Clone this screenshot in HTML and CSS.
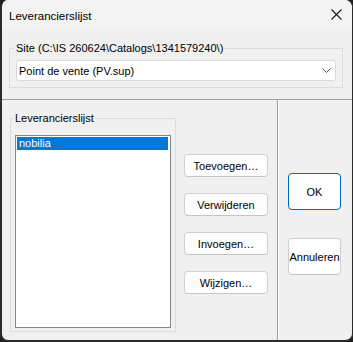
FILE: index.html
```html
<!DOCTYPE html>
<html lang="nl">
<head>
    <meta charset="UTF-8">
    <title>Leverancierslijst</title>
    <link rel="stylesheet" href="styles.css">
</head>
<body>
    <div class="window">
        <div class="titlebar">
            <span class="title">Leverancierslijst</span>
            <svg class="close" width="11" height="11" viewBox="0 0 11 11">
                <path d="M0.5 0.5 L10.5 10.5 M10.5 0.5 L0.5 10.5" stroke="#1a1a1a" stroke-width="1.1" fill="none"/>
            </svg>
        </div>
        <div class="top">
            <fieldset class="group site">
                <legend>Site (C:\IS 260624\Catalogs\1341579240\)</legend>
                <div class="combo">
                    <span>Point de vente (PV.sup)</span>
                    <svg width="9" height="5" viewBox="0 0 9 5">
                        <path d="M0.5 0.5 L4.5 4.5 L8.5 0.5" stroke="#5f5f5f" stroke-width="1" fill="none"/>
                    </svg>
                </div>
            </fieldset>
        </div>
        <div class="bottom">
            <div class="left">
                <fieldset class="group list-group">
                    <legend>Leverancierslijst</legend>
                    <div class="listbox">
                        <div class="item selected">nobilia</div>
                    </div>
                </fieldset>
                <div class="actions">
                    <button>Toevoegen…</button>
                    <button>Verwijderen</button>
                    <button>Invoegen…</button>
                    <button>Wijzigen…</button>
                </div>
            </div>
            <div class="right">
                <button class="big default">OK</button>
                <button class="big">Annuleren</button>
            </div>
        </div>
    </div>
</body>
</html>
```

FILE: styles.css
```css
body {
    margin: 0;
    width: 353px;
    height: 342px;
    background-color: #202020;
    font-family: "Liberation Sans", Arial, sans-serif;
    font-size: 11px;
    color: #000;
    overflow: hidden;
}
.window {
    box-sizing: border-box;
    width: 353px;
    height: 342px;
    border-left: 2px solid #2b2b2b;
    border-right: 1px solid #2b2b2b;
    border-bottom: 2px solid #2b2b2b;
    border-radius: 8px;
    background-color: #f0f0f0;
    overflow: hidden;
    display: flex;
    flex-direction: column;
}
.titlebar {
    height: 30px;
    background-color: #f3f3f3;
    display: flex;
    align-items: center;
    justify-content: space-between;
    padding: 0 10px 0 7px;
}
.title {
    font-size: 11.5px;
    padding-top: 2px;
}
.close {
    margin-top: -1px;
}
.top {
    box-sizing: border-box;
    height: 70px;
    border-bottom: 1px solid #a0a0a0;
    padding-top: 12px;
}
.group {
    margin: 0;
    border: 1px solid #dcdcdc;
    border-radius: 0;
    padding: 0 6px 6px 6px;
}
.group legend {
    padding: 0 2px;
    margin-left: -2px;
    line-height: 13px;
}
.site {
    margin: 0 9px 0 7px;
    padding-top: 5px;
}
.combo {
    height: 21px;
    box-sizing: border-box;
    background-color: #fff;
    border: 1px solid #d9d9d9;
    border-radius: 3px;
    display: flex;
    align-items: center;
    justify-content: space-between;
    padding: 0 4px 0 2px;
}
.bottom {
    flex: 1;
    display: flex;
}
.left {
    width: 275px;
    border-right: 1px solid #a0a0a0;
    box-shadow: 1px 0 0 #fff;
    display: flex;
    align-items: flex-start;
}
.list-group {
    margin: 12px 0 0 8px;
    width: 166px;
    height: 220px;
    box-sizing: border-box;
    padding: 10px 4px 3px 4px;
}
.listbox {
    height: 193px;
    box-sizing: border-box;
    background-color: #fff;
    border: 1px solid #828790;
    padding: 1px 2px 0 1px;
}
.item {
    height: 13px;
    line-height: 13px;
    padding-left: 2px;
}
.item.selected {
    background-color: #0078d7;
    color: #fff;
}
.actions {
    margin: 54px 0 0 8px;
    display: flex;
    flex-direction: column;
    gap: 16px;
}
button {
    font-family: "Liberation Sans", Arial, sans-serif;
    font-size: 11px;
    color: #000;
    background-color: #fdfdfd;
    border: 1px solid #d0d0d0;
    border-bottom-color: #c4c4c4;
    border-radius: 4px;
    padding: 0;
}
.actions button {
    width: 84px;
    height: 23px;
}
.right {
    flex: 1;
    display: flex;
    flex-direction: column;
    align-items: flex-start;
    padding: 73px 0 0 10px;
    gap: 28px;
}
.big {
    width: 53px;
    height: 37px;
}
.big.default {
    border: 1px solid #0067c0;
}
```
